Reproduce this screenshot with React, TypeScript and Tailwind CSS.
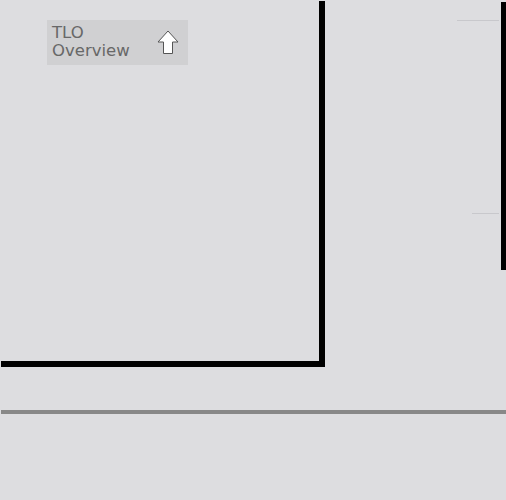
import React from "react";

export default function App() {
  return (
    <div
      className="w-[506px] h-[500px] bg-[#dddde0] overflow-hidden"
      style={{ fontFamily: '"DejaVu Sans", sans-serif' }}
    >
      <div className="flex items-start">
        <div className="ml-[1px] mt-[1px] w-[324px] h-[366px] border-r-[6px] border-b-[6px] border-black pl-[46px] pt-[19px] box-border">
          <div className="w-[141px] h-[45px] bg-[#d0d0d2] flex items-start pl-[5px] pt-[4px]">
            <div className="w-[105px] text-[16.5px] leading-[18px] text-[#686868]">
              <div>TLO</div>
              <div>Overview</div>
            </div>
            <svg
              className="mt-[6px]"
              width="22"
              height="25"
              viewBox="0 0 22 25"
            >
              <path
                d="M11 1 L21 12 L15.5 12 L15.5 23.5 L6.5 23.5 L6.5 12 L1 12 Z"
                fill="#ffffff"
                stroke="#555555"
                strokeWidth="1"
                strokeLinejoin="miter"
              />
            </svg>
          </div>
        </div>
        <div className="flex-1 flex justify-end mt-[2px]">
          <div className="flex flex-col items-end mr-[2px]">
            <div className="mt-[18px] h-px w-[42px] bg-[#c8c8cc]" />
            <div className="mt-[192px] h-px w-[27px] bg-[#c8c8cc]" />
          </div>
          <div className="w-[5px] h-[268px] bg-black" />
        </div>
      </div>
      <div className="mt-[43px] ml-[1px] h-[4px] bg-[#888888]" />
    </div>
  );
}
